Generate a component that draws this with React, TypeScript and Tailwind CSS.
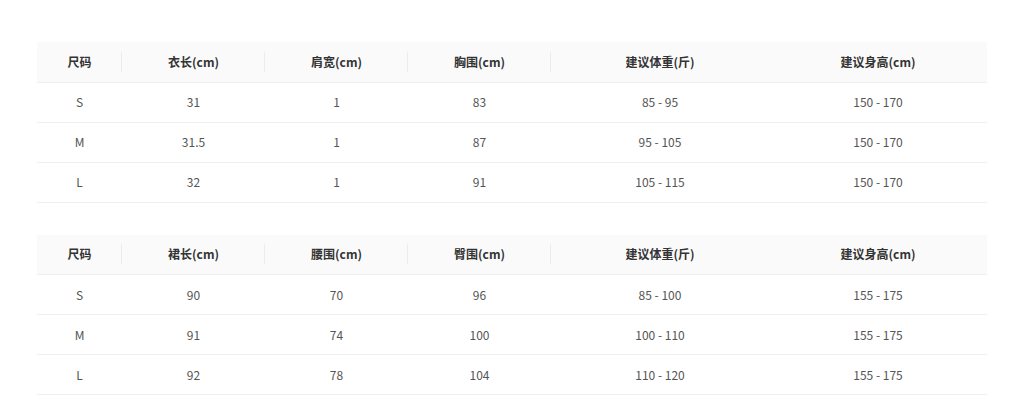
const topRows = [
  ['S', '31', '1', '83', '85 - 95', '150 - 170'],
  ['M', '31.5', '1', '87', '95 - 105', '150 - 170'],
  ['L', '32', '1', '91', '105 - 115', '150 - 170'],
]

const bottomRows = [
  ['S', '90', '70', '96', '85 - 100', '155 - 175'],
  ['M', '91', '74', '100', '100 - 110', '155 - 175'],
  ['L', '92', '78', '104', '110 - 120', '155 - 175'],
]

const widths = ['w-[85px]', 'w-[143px]', 'w-[143px]', 'w-[143px]', 'w-[218px]', 'w-[218px]']

const SizeTable = ({ headers, rows }: { headers: string[]; rows: string[][] }) => (
  <table className="w-[950px] table-fixed border-collapse text-[12px]">
    <colgroup>
      {widths.map((w, i) => (
        <col key={i} className={w} />
      ))}
    </colgroup>
    <thead>
      <tr className="h-10 bg-[#fafafa]">
        {headers.map((h, i) => (
          <th key={h} className="relative border-b border-[#f0f0f0] p-0 text-center font-bold text-[#333]">
            {h}
            {i < 4 && (
              <span className="absolute right-0 top-1/2 h-[21px] w-px -translate-y-1/2 bg-[#ececec]" />
            )}
          </th>
        ))}
      </tr>
    </thead>
    <tbody>
      {rows.map((row) => (
        <tr key={row[0]} className="h-10">
          {row.map((cell, i) => (
            <td key={i} className="border-b border-[#f0f0f0] p-0 text-center text-[#555]">
              {cell}
            </td>
          ))}
        </tr>
      ))}
    </tbody>
  </table>
)

export default function App() {
  return (
    <div className="h-[404px] w-[1024px] bg-white pl-[37px] pt-[42px] font-['Microsoft_YaHei','Noto_Sans_CJK_SC',sans-serif]">
      <div className="flex flex-col gap-8">
        <SizeTable
          headers={['尺码', '衣长(cm)', '肩宽(cm)', '胸围(cm)', '建议体重(斤)', '建议身高(cm)']}
          rows={topRows}
        />
        <SizeTable
          headers={['尺码', '裙长(cm)', '腰围(cm)', '臀围(cm)', '建议体重(斤)', '建议身高(cm)']}
          rows={bottomRows}
        />
      </div>
    </div>
  )
}
